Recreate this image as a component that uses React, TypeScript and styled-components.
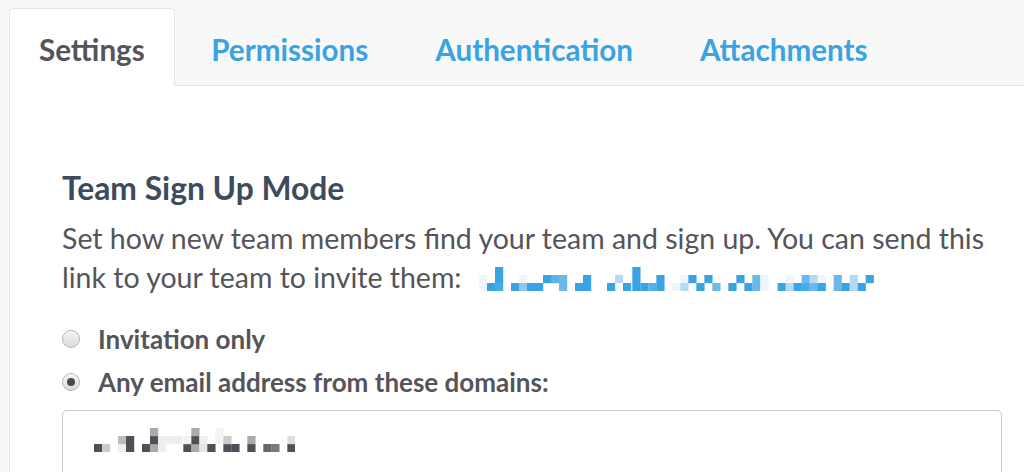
import React from "react";
import styled, { createGlobalStyle } from "styled-components";

const Global = createGlobalStyle`
  html, body { margin: 0; padding: 0; background: #f8f8f8; }
  body { font-family: Lato, "Open Sans", sans-serif; -webkit-font-smoothing: antialiased; }
`;

const Page = styled.div`
  padding: 8px 0 0 9px;
  height: 464px;
  overflow: hidden;
`;

const TabBar = styled.div`
  display: flex;
  align-items: stretch;
  height: 77px;
  border-bottom: 1px solid #e6e6e6;
`;

const Tab = styled.div<{ $active?: boolean }>`
  display: flex;
  align-items: center;
  padding: ${(p) => (p.$active ? "4px 29px 0" : "4px 32.5px 0")};
  margin-right: ${(p) => (p.$active ? "3px" : "0")};
  font-size: 29.6px;
  font-weight: 700;
  color: ${(p) => (p.$active ? "#555459" : "#3aa3e3")};
  background: ${(p) => (p.$active ? "#ffffff" : "transparent")};
  border: 1px solid ${(p) => (p.$active ? "#e6e6e6" : "transparent")};
  border-bottom: none;
  border-radius: 5px 5px 0 0;
  margin-bottom: -1px;
  height: 78px;
  box-sizing: border-box;
  white-space: nowrap;
`;

const Panel = styled.div`
  background: #ffffff;
  border-left: 1px solid #e6e6e6;
  padding: 82px 0 0 52px;
  height: 400px;
`;

const Heading = styled.h2`
  margin: 0;
  font-size: 31.8px;
  line-height: 40px;
  font-weight: 700;
  color: #3d4b5c;
`;

const Description = styled.p`
  margin: 11px 0 0;
  font-size: 28.5px;
  line-height: 39px;
  color: #555459;
  width: 940px;
`;

const RadioList = styled.div`
  display: flex;
  flex-direction: column;
  gap: 5px;
  margin-top: 23px;
`;

const RadioRow = styled.label`
  display: flex;
  align-items: center;
  gap: 18px;
  font-size: 26px;
  line-height: 38px;
  font-weight: 700;
  color: #555459;
`;

const RadioDot = styled.span<{ $checked?: boolean }>`
  width: 18px;
  height: 18px;
  box-sizing: border-box;
  border-radius: 50%;
  border: 1px solid #b5b5b5;
  background: linear-gradient(#f4f4f4, #dcdcdc);
  box-shadow: inset 0 1px 1px rgba(255, 255, 255, 0.8);
  display: flex;
  align-items: center;
  justify-content: center;
  flex: none;
  &::after {
    content: "";
    display: ${(p) => (p.$checked ? "block" : "none")};
    width: 8px;
    height: 8px;
    border-radius: 50%;
    background: #4a4a4a;
  }
`;

const DomainInput = styled.div`
  margin-top: 9px;
  width: 940px;
  height: 80px;
  box-sizing: border-box;
  border: 1px solid #c8c8c8;
  border-radius: 5px;
  padding: 17px 0 0 31px;
`;

const Blur = styled.svg<{ $shift?: number; $block?: boolean }>`
  display: ${(p) => (p.$block ? "block" : "inline-block")};
  vertical-align: ${(p) => p.$shift ?? 0}px;
`;

type Cell = [number, number, string];

const B = "#3aa3e3";
const M = "#6cb8ea";
const L = "#b4daf4";
const F = "#eef6fc";

const linkCells: Cell[] = [
  [32, 1, F], [32, 2, F],
  [56, 2, B],
  [80, 0, B], [80, 1, B], [80, 2, "#4aabe6"],
  [128, 2, B], [152, 1, F], [152, 2, "#8ec8ee"], [176, 2, B], [200, 2, B],
  [224, 1, B], [248, 1, "#5ab3e8"], [272, 1, M], [272, 2, M],
  [320, 2, B], [344, 1, B], [344, 2, B],
  [416, 2, B], [440, 1, L], [464, 2, B], [492, 0, B], [492, 1, B], [492, 2, B],
  [516, 2, B], [540, 2, "#55b0e8"], [564, 1, B], [564, 2, B],
  [612, 2, F], [636, 1, F], [636, 2, L], [660, 1, B], [684, 2, B], [708, 1, B], [732, 2, M],
  [780, 2, B], [804, 1, B], [828, 2, B], [852, 1, M], [852, 2, M], [876, 1, F], [876, 2, F],
  [928, 2, B], [952, 1, F], [952, 2, L], [976, 2, B], [1000, 1, M], [1000, 2, "#4aabe6"],
  [1024, 1, L], [1024, 2, M], [1048, 1, F], [1048, 2, B],
  [1096, 1, M], [1096, 2, M], [1120, 2, B], [1144, 1, L], [1144, 2, L], [1168, 2, B], [1192, 1, B],
];

const D = "#505058";
const grayCells: Cell[] = [
  [28, 2, D], [52, 2, "#cccccc"], [100, 2, "#eeeeee"], [124, 2, D], [172, 2, D], [196, 2, "#aaaaaa"],
  [220, 2, "#eeeeee"], [296, 2, D], [320, 2, "#aaaaaa"], [344, 2, "#e4e4e4"], [368, 2, D],
  [416, 2, D], [440, 2, D], [488, 2, D], [536, 2, "#666666"], [560, 2, "#7a7a7a"], [608, 2, D],
  [100, 1, "#bbbbbb"], [124, 1, D], [196, 1, D], [220, 1, "#eeeeee"], [244, 1, "#eeeeee"],
  [268, 1, "#eeeeee"], [296, 1, "#f2f2f2"], [320, 1, D], [344, 1, "#eeeeee"], [392, 1, "#f4f4f4"],
  [416, 1, "#cccccc"], [488, 1, "#aaaaaa"], [608, 1, "#dddddd"],
  [196, 0, "#aaaaaa"], [320, 0, "#aaaaaa"], [392, 0, "#f4f4f4"],
];

function PixelBlur({
  cells,
  origin,
  shift,
  block,
}: {
  cells: Cell[];
  origin: number;
  shift?: number;
  block?: boolean;
}) {
  const maxX = Math.max(...cells.map((c) => c[0]));
  const width = (maxX - origin) / 3 + 8;
  return (
    <Blur
      $shift={shift}
      $block={block}
      width={width}
      height={24}
      viewBox={`0 0 ${width} 24`}
      aria-hidden
    >
      {cells.map(([x, r, c], i) => (
        <rect key={i} x={(x - origin) / 3} y={r * 8} width={8.2} height={8.2} fill={c} />
      ))}
    </Blur>
  );
}

const LinkGap = styled.span`
  display: inline-block;
  width: 18px;
`;

export default function App() {
  return (
    <>
      <Global />
      <Page>
        <TabBar>
          <Tab $active>Settings</Tab>
          <Tab>Permissions</Tab>
          <Tab>Authentication</Tab>
          <Tab>Attachments</Tab>
        </TabBar>
        <Panel>
          <Heading>Team Sign Up Mode</Heading>
          <Description>
            Set how new team members find your team and sign up. You can send this link to your
            team to invite them:
            <LinkGap />
            <PixelBlur cells={linkCells} origin={32} shift={-3} />
          </Description>
          <RadioList>
            <RadioRow>
              <RadioDot />
              Invitation only
            </RadioRow>
            <RadioRow>
              <RadioDot $checked />
              Any email address from these domains:
            </RadioRow>
          </RadioList>
          <DomainInput>
            <PixelBlur cells={grayCells} origin={28} block />
          </DomainInput>
        </Panel>
      </Page>
    </>
  );
}
